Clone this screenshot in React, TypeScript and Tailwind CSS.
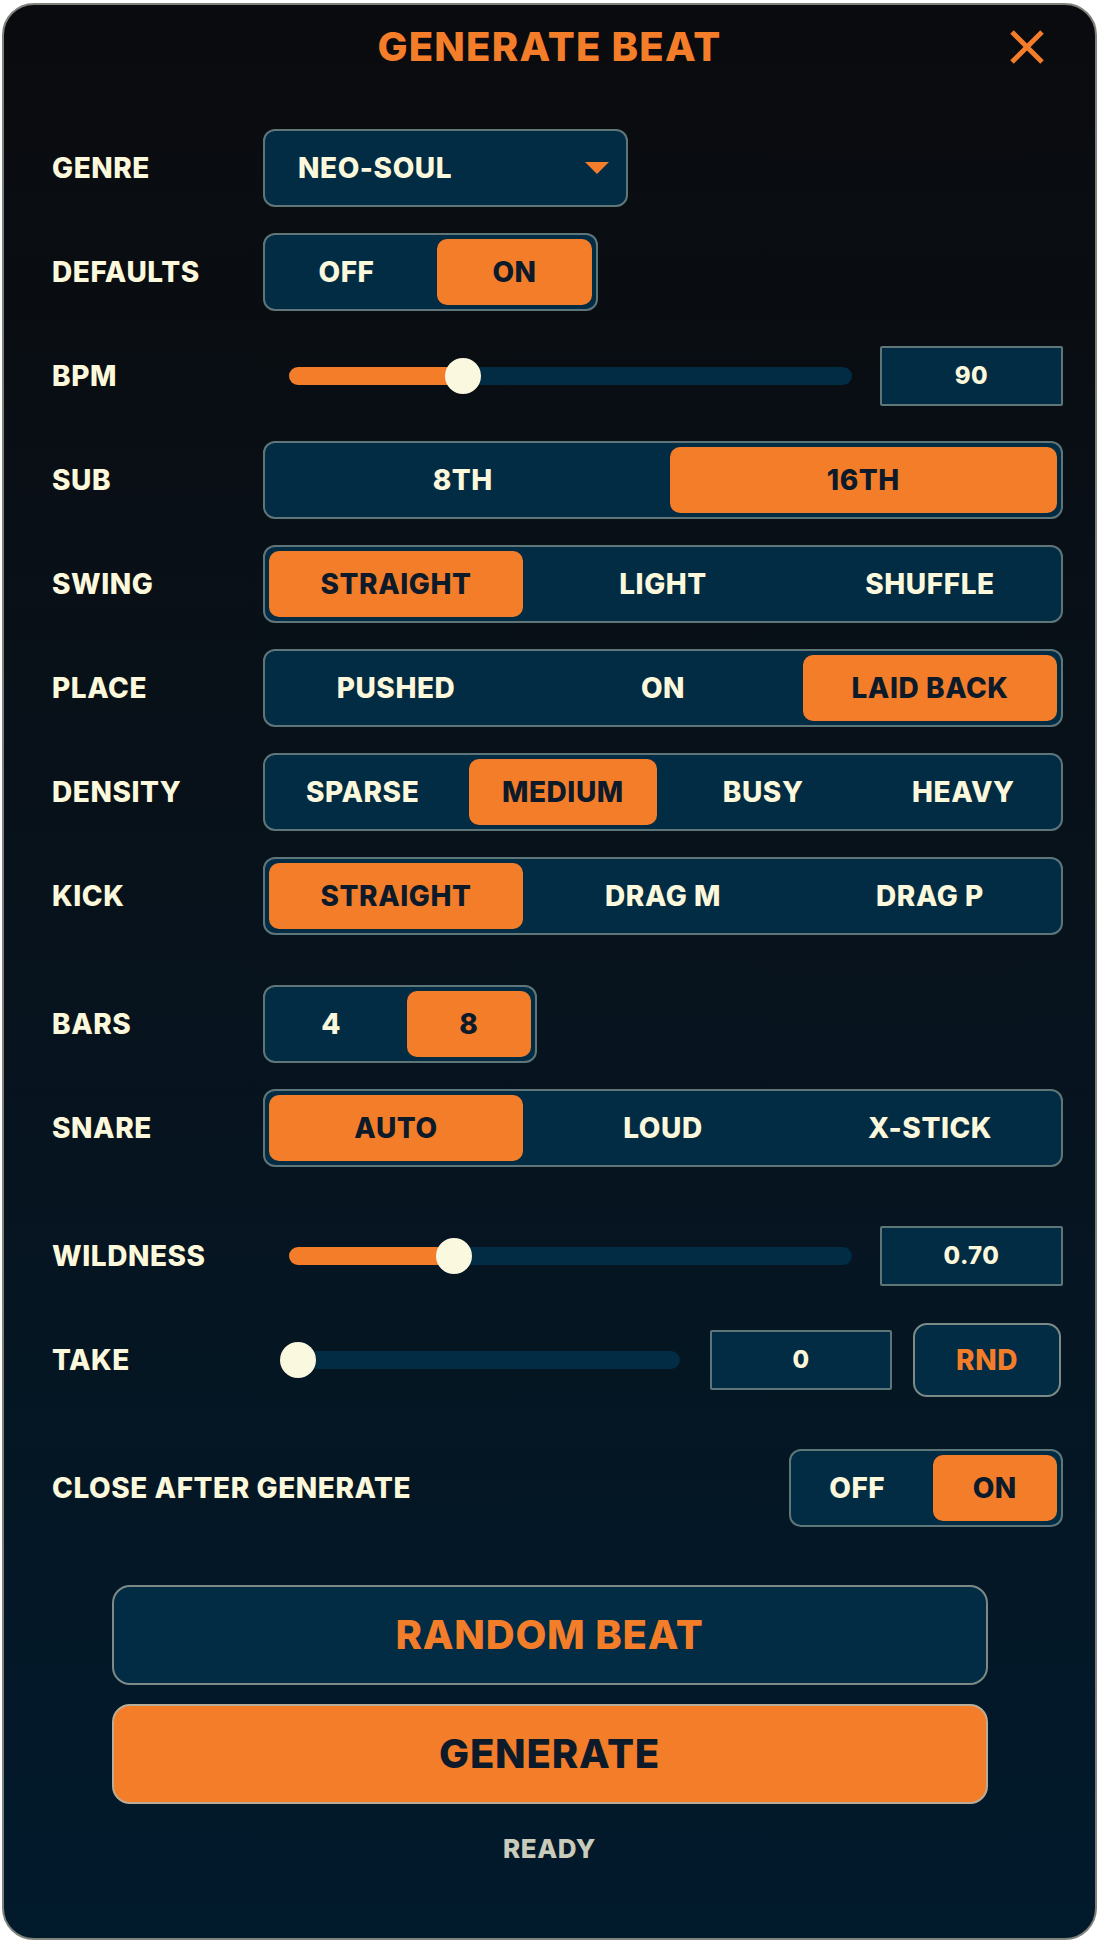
import React from "react";
import clsx from "clsx";

const FONT = { fontFamily: "Inter, 'Open Sans', 'Liberation Sans', sans-serif" };

const Label = ({ children }: { children: React.ReactNode }) => (
    <div className="w-[211px] shrink-0 text-[28px] font-extrabold tracking-[0.02em] text-[#fcf8dc]">{children}</div>
);

const Segmented = ({ options, active, className }: { options: string[]; active: number; className?: string }) => (
    <div className={clsx("flex h-[78px] gap-[13px] rounded-[12px] border-2 border-[#5f7679] bg-[#022b44] p-[4px]", className)}>
        {options.map((o, i) => (
            <div
                key={o}
                className={clsx(
                    "flex flex-1 items-center justify-center rounded-[10px] text-[28px] font-extrabold tracking-[0.02em]",
                    i === active ? "bg-[#f47d2a] text-[#0c1a29]" : "text-[#fcf8dc]"
                )}
            >
                {o}
            </div>
        ))}
    </div>
);

const Slider = ({ value, className }: { value: number; className?: string }) => (
    <div className={clsx("relative flex h-[36px] items-center", className)}>
        <div className="h-[18px] w-full rounded-full bg-[#022b44]" />
        {value > 0 && (
            <div
                className="absolute left-0 h-[18px] rounded-full bg-[#f47d2a]"
                style={{ width: `calc(${value} * (100% - 18px) + 9px)` }}
            />
        )}
        <div
            className="absolute top-0 h-[36px] w-[36px] rounded-full bg-[#fbf8e0]"
            style={{ left: `calc(${value} * (100% - 18px) - 9px)` }}
        />
    </div>
);

const NumBox = ({ value, className }: { value: string; className?: string }) => (
    <div
        className={clsx(
            "flex h-[60px] items-center justify-center rounded-[2px] border-2 border-[#5f7679] bg-[#022b44] text-[24px] font-extrabold tracking-[0.02em] text-[#fcf8dc]",
            className
        )}
    >
        {value}
    </div>
);

const Row = ({ children, className }: { children: React.ReactNode; className?: string }) => (
    <div className={clsx("flex h-[78px] items-center", className)}>{children}</div>
);

const App = () => {
    return (
        <div className="h-[1944px] w-[1100px] overflow-hidden bg-white" style={FONT}>
            <div className="ml-[2px] mt-[3px] flex h-[1937px] w-[1095px] flex-col rounded-[32px] border-2 border-[#80837b] bg-gradient-to-b from-[#0a0b0e] to-[#011a2c]">
                {/* header */}
                <div className="relative flex h-[84px] shrink-0 items-center justify-center">
                    <h1 className="text-[40px] font-extrabold tracking-[0.03em] text-[#f47d2a]">GENERATE BEAT</h1>
                    <svg className="absolute right-[50px] top-[24px] h-[36px] w-[36px]" viewBox="0 0 36 36">
                        <line x1="3" y1="3" x2="33" y2="33" stroke="#f47d2a" strokeWidth="5" />
                        <line x1="33" y1="3" x2="3" y2="33" stroke="#f47d2a" strokeWidth="5" />
                    </svg>
                </div>

                {/* settings */}
                <div className="mt-[40px] flex flex-col gap-[26px] pl-[48px] pr-[32px]">
                    <Row>
                        <Label>GENRE</Label>
                        <div className="flex h-[78px] w-[365px] items-center justify-between rounded-[12px] border-2 border-[#5f7679] bg-[#022b44] pl-[33px] pr-[17px]">
                            <span className="text-[28px] font-extrabold tracking-[0.02em] text-[#fcf8dc]">NEO-SOUL</span>
                            <svg width="24" height="12" viewBox="0 0 24 12">
                                <polygon points="0,0 24,0 12,12" fill="#f47d2a" />
                            </svg>
                        </div>
                    </Row>
                    <Row>
                        <Label>DEFAULTS</Label>
                        <Segmented options={["OFF", "ON"]} active={1} className="w-[335px]" />
                    </Row>
                    <Row>
                        <Label>BPM</Label>
                        <Slider value={0.303} className="ml-[26px] flex-1" />
                        <NumBox value="90" className="ml-[28px] w-[183px]" />
                    </Row>
                    <Row>
                        <Label>SUB</Label>
                        <Segmented options={["8TH", "16TH"]} active={1} className="flex-1" />
                    </Row>
                    <Row>
                        <Label>SWING</Label>
                        <Segmented options={["STRAIGHT", "LIGHT", "SHUFFLE"]} active={0} className="flex-1" />
                    </Row>
                    <Row>
                        <Label>PLACE</Label>
                        <Segmented options={["PUSHED", "ON", "LAID BACK"]} active={2} className="flex-1" />
                    </Row>
                    <Row>
                        <Label>DENSITY</Label>
                        <Segmented options={["SPARSE", "MEDIUM", "BUSY", "HEAVY"]} active={1} className="flex-1" />
                    </Row>
                    <Row>
                        <Label>KICK</Label>
                        <Segmented options={["STRAIGHT", "DRAG M", "DRAG P"]} active={0} className="flex-1" />
                    </Row>
                    <Row className="mt-[24px]">
                        <Label>BARS</Label>
                        <Segmented options={["4", "8"]} active={1} className="w-[274px]" />
                    </Row>
                    <Row>
                        <Label>SNARE</Label>
                        <Segmented options={["AUTO", "LOUD", "X-STICK"]} active={0} className="flex-1" />
                    </Row>
                    <Row className="mt-[24px]">
                        <Label>WILDNESS</Label>
                        <Slider value={0.286} className="ml-[26px] flex-1" />
                        <NumBox value="0.70" className="ml-[28px] w-[183px]" />
                    </Row>
                    <Row>
                        <Label>TAKE</Label>
                        <Slider value={0} className="ml-[26px] flex-1" />
                        <NumBox value="0" className="ml-[30px] w-[182px]" />
                        <button className="ml-[21px] mr-[2px] flex h-[74px] w-[148px] items-center justify-center rounded-[14px] border-2 border-[#7d8a86] bg-[#022b44] text-[28px] font-extrabold tracking-[0.02em] text-[#f47d2a]">
                            RND
                        </button>
                    </Row>
                    <Row className="mt-[24px] justify-between">
                        <div className="text-[28px] font-extrabold tracking-[0.02em] text-[#fcf8dc]">CLOSE AFTER GENERATE</div>
                        <Segmented options={["OFF", "ON"]} active={1} className="w-[274px]" />
                    </Row>
                </div>

                {/* actions */}
                <div className="mt-[58px] flex flex-col items-center gap-[19px]">
                    <button className="flex h-[100px] w-[876px] items-center justify-center rounded-[18px] border-2 border-[#7d8a86] bg-[#022b44] text-[40px] font-extrabold tracking-[0.02em] text-[#f47d2a]">
                        RANDOM BEAT
                    </button>
                    <button className="flex h-[100px] w-[876px] items-center justify-center rounded-[18px] border-2 border-[#b9ad97] bg-[#f47d2a] text-[40px] font-extrabold tracking-[0.02em] text-[#0c1a29]">
                        GENERATE
                    </button>
                    <div className="mt-[6px] text-[26px] font-extrabold tracking-[0.02em] text-[#c9cbbb]">READY</div>
                </div>
            </div>
        </div>
    );
};

export default App;
